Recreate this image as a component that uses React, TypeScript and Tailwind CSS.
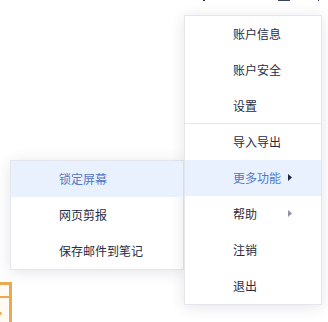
import React from "react";

const font = { fontFamily: '"Noto Sans CJK SC", "Noto Sans", sans-serif' };

type Item = { label: string; active?: boolean; arrow?: boolean; divider?: boolean };

const mainItems: Item[] = [
  { label: "账户信息" },
  { label: "账户安全" },
  { label: "设置", divider: true },
  { label: "导入导出" },
  { label: "更多功能", active: true, arrow: true },
  { label: "帮助", arrow: true },
  { label: "注销" },
  { label: "退出" },
];

const subItems: Item[] = [
  { label: "锁定屏幕", active: true },
  { label: "网页剪报" },
  { label: "保存邮件到笔记" },
];

function Caret({ dark }: { dark?: boolean }) {
  return (
    <svg width="4" height="7" viewBox="0 0 4 7" className="absolute left-[103px] top-[14px]">
      <path d="M0 0 L4 3.5 L0 7 Z" fill={dark ? "#1f2740" : "#8d93a8"} />
    </svg>
  );
}

function MenuRow({ item }: { item: Item }) {
  return (
    <div
      className={`relative h-9 flex items-center pl-[48px] text-[12px] leading-none ${
        item.active ? "bg-[#e8f1fd] text-[#5577c8]" : "text-[#262c44]"
      } ${item.divider ? "border-b border-[#e6e8ee]" : ""}`}
    >
      <span>{item.label}</span>
      {item.arrow && <Caret dark={item.active} />}
    </div>
  );
}

function Menu({ items, className }: { items: Item[]; className: string }) {
  return (
    <div className={`bg-white border border-[#e4e6ec] shadow-[0_2px_14px_rgba(30,40,70,0.12)] ${className}`}>
      {items.map((it) => (
        <MenuRow key={it.label} item={it} />
      ))}
    </div>
  );
}

export default function App() {
  return (
    <div className="relative w-[328px] h-[322px] bg-white overflow-hidden" style={font}>
      {/* bits of the page header peeking above */}
      <div className="flex items-start h-px">
        <div className="ml-[203px] w-[2px] h-px bg-[#2a3350]" />
        <div className="ml-[73px] w-[12px] h-px bg-[#3a4460]" />
        <div className="ml-[28px] w-px h-px bg-[#2a3350]" />
      </div>

      {/* orange icon fragment behind */}
      <svg width="13" height="40" viewBox="0 0 13 40" className="absolute left-0 top-[282px]">
        <rect x="0" y="0" width="12" height="40" fill="#fffaf2" />
        <rect x="0" y="0" width="12" height="3" fill="#eaa950" />
        <rect x="9" y="0" width="3" height="40" fill="#eaa950" />
        <rect x="0" y="14" width="9" height="2" fill="#eaa950" />
        <rect x="0" y="30" width="1.5" height="3" fill="#eaa950" />
      </svg>

      {/* dropdown with open submenu */}
      <div className="absolute left-[10px] top-[15px] flex items-start">
        <Menu items={subItems} className="w-[174px] mt-[145px]" />
        <Menu items={mainItems} className="w-[138px]" />
      </div>
    </div>
  );
}
